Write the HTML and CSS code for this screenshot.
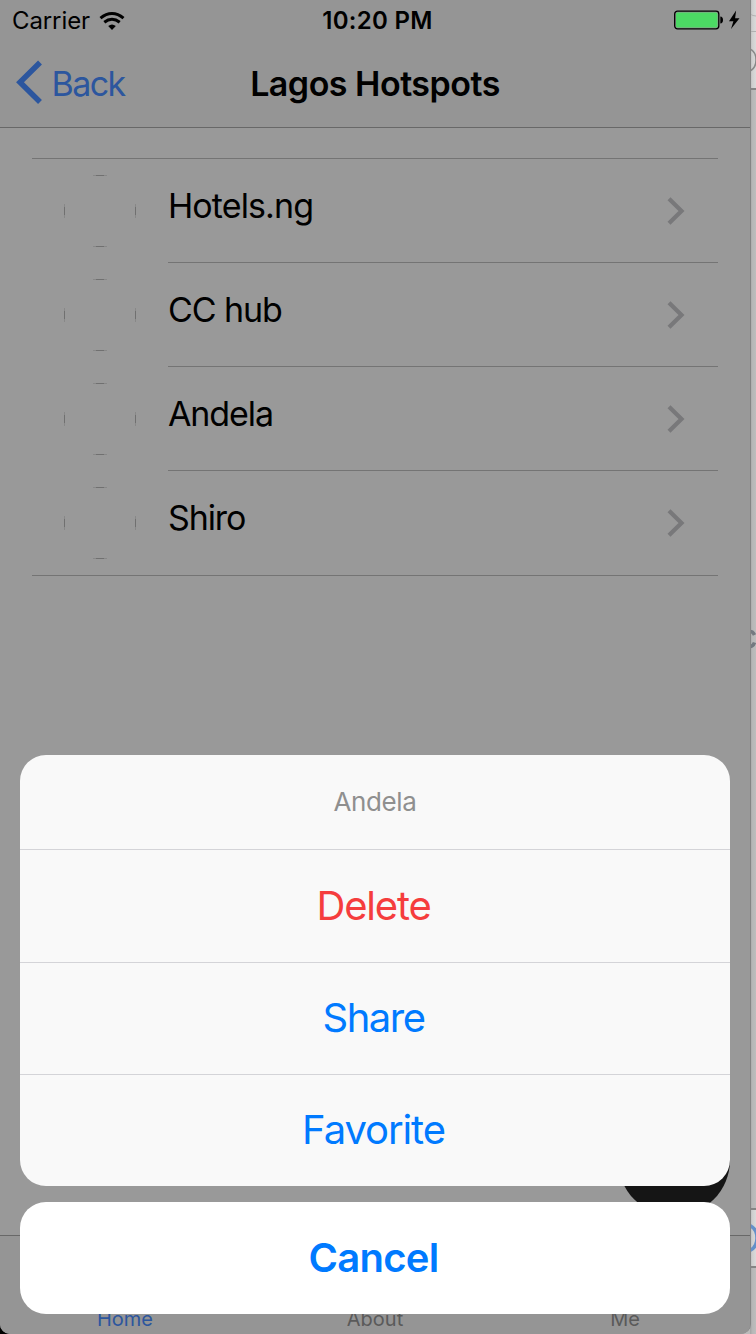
FILE: index.html
```
<!DOCTYPE html>
<html lang="en">
<head>
<meta charset="utf-8">
<title>Lagos Hotspots</title>
<link rel="stylesheet" href="styles.css">
</head>
<body>
<div class="desktop">
  <svg class="backdrop" width="6" height="1334" viewBox="0 0 6 1334">
    <defs>
      <linearGradient id="shade"><stop offset="0" stop-color="#a4a4a4"/><stop offset=".4" stop-color="#b7b7b7"/><stop offset="1" stop-color="#bdbdbd"/></linearGradient>
      <linearGradient id="shadeTop"><stop offset="0" stop-color="#b8b8b8"/><stop offset=".4" stop-color="#cfcfcf"/><stop offset="1" stop-color="#dadada"/></linearGradient>
    </defs>
    <rect width="6" height="1334" fill="url(#shade)"/>
    <rect width="6" height="88" fill="url(#shadeTop)"/>
    <path d="M0 14q3 2 6 2M0 31.500h6" stroke="#b0b0b0" fill="none"/>
    <path d="M0 89h6" stroke="#858585" stroke-width="2"/>
    <path d="M0 49Q6 52 6 60Q6 68 0 71" stroke="#888" stroke-width="1.500" fill="none"/>
    <path d="M0 631.500q3 0 4.500 3.500M0 646.500q3 0 4.500-4" stroke="#747980" stroke-width="3.500" fill="none"/>
    <rect y="1209" width="6" height="57" fill="url(#shadeTop)"/>
    <path d="M0 1209h6M0 1267h6" stroke="#858585" stroke-width="2"/>
    <path d="M0 1225.500Q7 1229 7 1238Q7 1247 0 1250.500" stroke="#6590c8" stroke-width="3.500" fill="none"/>
  </svg>
  <main class="phone">
    <header class="top">
      <div class="status">
        <div class="carrier"><span class="carrier-name">Carrier</span>
          <svg width="26" height="20" viewBox="0 0 26 20">
            <g fill="none" stroke="#000" stroke-width="3"><path d="M1.500 7.200Q7 2.500 13 2.500T24.500 7.200"/><path d="M5.300 11.200Q9 8.300 13 8.300T20.700 11.200"/></g>
            <path d="M9.200 15.100Q13 11.800 16.800 15.100L13 19z"/>
          </svg>
        </div>
        <span class="time">10:20 PM</span>
        <svg class="power" width="68" height="22" viewBox="0 0 68 22">
          <rect x=".7" y="1.200" width="44.100" height="17.600" rx="2.800" fill="none" stroke="#000" stroke-width="1.300"/>
          <rect x="2" y="2.500" width="41.500" height="15" rx="1.500" fill="#4cd964"/>
          <path d="M46.300 6.500q2.700.4 2.700 3.500t-2.700 3.500z"/>
          <path d="M62.100.5L55 11.200h4.400L57 19.100L65.500 8.300h-4.400z"/>
        </svg>
      </div>
      <nav class="navbar">
        <a class="back"><svg width="27" height="44" viewBox="0 0 27 44"><path d="M24 2.500L4 22.200L24 42" fill="none" stroke="#2c569e" stroke-width="5.500"/></svg><span>Back</span></a>
        <h1 class="title">Lagos Hotspots</h1>
      </nav>
    </header>
    <ul class="list">
      <li class="row"><svg class="avatar" viewBox="0 0 72 72"><use href="#ring"/></svg><div class="cell"><span class="name hotels">Hotels.ng</span><svg class="chev" viewBox="0 0 18 28"><use href="#chevron"/></svg></div></li>
      <li class="row"><svg class="avatar" viewBox="0 0 72 72"><use href="#ring"/></svg><div class="cell"><span class="name">CC hub</span><svg class="chev" viewBox="0 0 18 28"><use href="#chevron"/></svg></div></li>
      <li class="row"><svg class="avatar" viewBox="0 0 72 72"><use href="#ring"/></svg><div class="cell"><span class="name">Andela</span><svg class="chev" viewBox="0 0 18 28"><use href="#chevron"/></svg></div></li>
      <li class="row"><svg class="avatar" viewBox="0 0 72 72"><use href="#ring"/></svg><div class="cell"><span class="name">Shiro</span><svg class="chev" viewBox="0 0 18 28"><use href="#chevron"/></svg></div></li>
    </ul>
    <footer class="tabs"><span class="tab active">Home</span><span class="tab">About</span><span class="tab">Me</span></footer>
    <div class="fab"></div>
    <section class="sheet">
      <div class="group">
        <div class="heading">Andela</div>
        <div class="action danger">Delete</div>
        <div class="action share">Share</div>
        <div class="action favorite">Favorite</div>
      </div>
      <div class="cancel"><span>Cancel</span></div>
    </section>
  </main>
</div>
<svg class="symbols" width="0" height="0">
  <symbol id="ring" viewBox="0 0 72 72"><path d="M29 .5h14M29 71.500h14M.5 29v14M71.500 29v14" stroke="#888"/><path d="M32 .5h8M32 71.500h8M.5 32v8M71.500 32v8" stroke="#707070"/></symbol>
  <symbol id="chevron" viewBox="0 0 18 28"><path d="M2 1.700L14.500 14L2 26.300" fill="none" stroke="#78787a" stroke-width="4.200"/></symbol>
</svg>
</body>
</html>
```
FILE: styles.css
```
* { box-sizing: border-box; }
body { margin: 0; font-family: Inter, "Liberation Sans", sans-serif; background: #000; }
.desktop { position: relative; width: 756px; height: 1334px; overflow: hidden; background: linear-gradient(to right, #000 50%, #bbb 50%); }
.backdrop { position: absolute; right: 0; top: 0; }
.symbols { position: absolute; }
.phone { position: relative; display: flex; flex-direction: column; width: 751px; height: 1334px; overflow: hidden; background: #999; border-right: 1px solid #858585; border-radius: 0 0 10px 10px; }
.top { height: 128px; background: #959595; border-bottom: 1px solid #686868; }
.status { display: grid; grid-template-columns: 1fr auto 1fr; align-items: center; height: 41px; padding: 1px 8px 0 12px; font-size: 24px; line-height: 40px; }
.carrier { display: flex; align-items: center; gap: 9px; letter-spacing: -0.1px; }
.carrier svg { margin-bottom: 1px; }
.time { font-weight: 600; letter-spacing: 0.3px; padding-left: 1px; }
.power { justify-self: end; }
.navbar { display: grid; grid-template-columns: 1fr auto 1fr; align-items: center; height: 86px; padding: 0 16px; font-size: 34px; line-height: 84px; }
.back { display: flex; align-items: center; gap: 9px; color: #2c569e; letter-spacing: -1.6px; }
.back svg { margin-bottom: 5px; margin-left: -0.5px; }
.back span { line-height: 82px; margin-bottom: 1px; }
.title { margin: 0; font-size: 34px; font-weight: 600; letter-spacing: -0.5px; line-height: 83px; padding-bottom: 1px; }
.list { list-style: none; margin: 30px 32px 0; padding: 0; border-top: 1px solid #747474; border-bottom: 1px solid #747474; }
.row { display: flex; height: 104px; padding: 16px 0 0 32px; gap: 32px; }
.avatar { width: 72px; height: 72px; }
.cell { display: flex; flex: 1; justify-content: space-between; align-items: center; height: 88px; padding: 0 33px 0 0; border-bottom: 1px solid #747474; }
.row:last-child .cell { border-color: transparent; }
.name { font-size: 34px; line-height: 40px; margin-bottom: 25px; letter-spacing: -1.1px; }
.hotels { letter-spacing: -0.9px; }
.chev { width: 18px; height: 28px; margin-bottom: 16px; }
.tabs { display: grid; grid-template-columns: repeat(3, 1fr); align-items: end; height: 99px; margin-top: auto; border-top: 1px solid #686868; background: #959595; text-align: center; font-size: 20px; line-height: 30px; color: #5a5a5a; }
.active { color: #2c569e; }
.fab { position: absolute; left: 618px; top: 1104px; width: 112px; height: 112px; border-radius: 50%; background: #151515; }
.sheet { position: absolute; inset: 755px 20px 20px; display: flex; flex-direction: column; gap: 16px; text-align: center; font-size: 40px; color: #007aff; }
.group { height: 431px; overflow: hidden; border-radius: 26px; background: #f9f9f9; }
.heading { height: 94px; font-size: 26px; line-height: 94px; color: #8f8f8f; letter-spacing: -0.4px; }
.action { height: 112px; padding-right: 3px; border-top: 1px solid #d4d4d8; line-height: 112px; letter-spacing: -1.2px; }
.danger { height: 113px; color: #f53d3d; }
.share { letter-spacing: -1.5px; line-height: 110px; }
.favorite { letter-spacing: -1.1px; line-height: 110px; }
.cancel { height: 112px; padding-right: 3px; border-radius: 26px; background: #fff; line-height: 112px; font-weight: 600; letter-spacing: -0.7px; }
```
